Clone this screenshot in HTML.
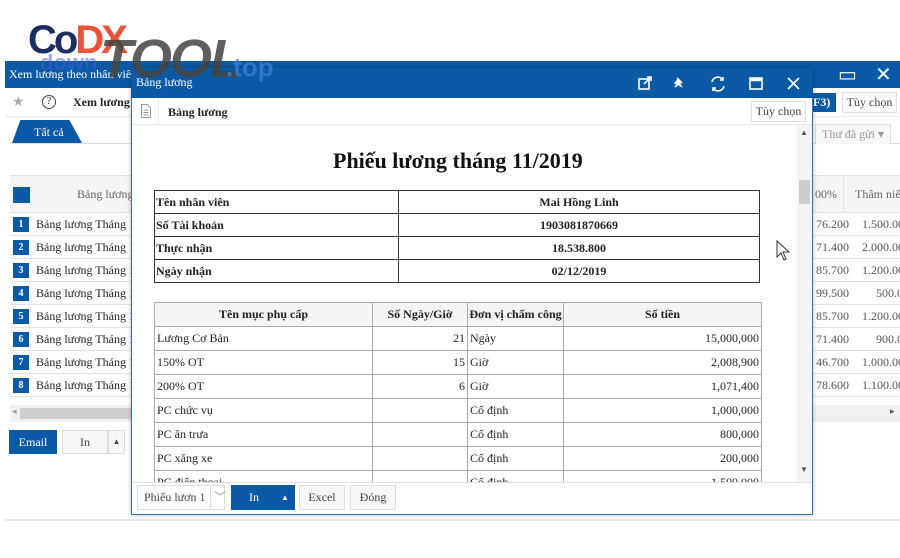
<!DOCTYPE html>
<html><head><meta charset="utf-8"><style>
*{margin:0;padding:0;box-sizing:border-box}
body{width:900px;height:558px;position:relative;overflow:hidden;background:#fff;font-family:"Liberation Serif",serif;font-size:12px;color:#222}
.a{position:absolute}
.blue{background:#0b5aa5}
.t{white-space:nowrap}
.btn{position:absolute;border:1px solid #ddd;background:#f7f7f7;color:#444;text-align:center;font-size:12px}
.row{position:absolute;left:10px;width:890px;height:23px;border-bottom:1px solid #e2e2e2}
.num{position:absolute;left:3px;top:4px;width:16px;height:15px;background:#0b5aa5;color:#fff;font-size:10px;text-align:center;line-height:15px;font-weight:bold}
table{border-collapse:collapse;position:absolute}
</style></head><body>
<!-- main window -->
<div class="a blue" style="left:5px;top:61px;width:895px;height:27px"></div>
<div class="a t" style="left:9px;top:67px;color:#fff;font-size:12px">Xem lương theo nhân viên</div>
<div class="a t" style="left:838px;top:62px;color:#fff;font-size:20px">▭</div>
<div class="a t" style="left:875px;top:62px;color:#fff;font-size:20px">✕</div>
<div class="a" style="left:5px;top:116px;width:895px;height:1px;background:#e6e6e6"></div>
<div class="a t" style="left:12px;top:94px;color:#aaa;font-size:14px">★</div>
<div class="a" style="left:42px;top:95px;width:14px;height:14px;border:1px solid #444;border-radius:50%;font-size:10px;text-align:center;line-height:12px">?</div>
<div class="a t" style="left:73px;top:95px;font-weight:bold">Xem lương</div>
<div class="a t blue" style="left:813px;top:93px;width:23px;height:19px;color:#fff;font-weight:bold;line-height:19px">F3)</div>
<div class="btn t" style="left:842px;top:92px;width:55px;height:21px;line-height:19px;background:#fff">Tùy chọn</div>
<div class="a" style="left:12px;top:120px;width:70px;height:23px;background:#0b5aa5;clip-path:polygon(12% 0,82% 0,100% 100%,0 100%)"></div>
<div class="a t" style="left:34px;top:125px;color:#fff">Tất cả</div>
<div class="a" style="left:10px;top:143px;width:890px;height:1px;background:#ddd"></div>
<div class="a t" style="left:815px;top:124px;color:#999;border:1px solid #ddd;border-bottom:none;padding:2px 6px;background:#f7f7f7">Thư đã gửi ▾</div>
<!-- grid -->
<div class="a" style="left:10px;top:175px;width:890px;height:38px;background:#f5f5f5;border-top:1px solid #e2e2e2;border-bottom:1px solid #e2e2e2"></div>
<div class="a blue" style="left:13px;top:187px;width:17px;height:16px"></div>
<div class="a t" style="left:77px;top:187px;color:#666">Bảng lương</div>
<div class="a t" style="left:815px;top:187px;color:#666">00%</div>
<div class="a t" style="left:855px;top:187px;color:#666">Thâm niên</div>
<div class="a" style="left:843px;top:175px;width:1px;height:38px;background:#e2e2e2"></div>
<div class="row" style="top:213px"><div class="num">1</div><span class="a t" style="left:26px;top:4px">Bảng lương Tháng 1</span><span class="a t" style="left:806px;top:4px;color:#555">76.200</span><span class="a t" style="left:852px;top:4px;color:#555">1.500.00</span></div>
<div class="row" style="top:236px"><div class="num">2</div><span class="a t" style="left:26px;top:4px">Bảng lương Tháng 1</span><span class="a t" style="left:806px;top:4px;color:#555">71.400</span><span class="a t" style="left:852px;top:4px;color:#555">2.000.00</span></div>
<div class="row" style="top:259px"><div class="num">3</div><span class="a t" style="left:26px;top:4px">Bảng lương Tháng 1</span><span class="a t" style="left:806px;top:4px;color:#555">85.700</span><span class="a t" style="left:852px;top:4px;color:#555">1.200.00</span></div>
<div class="row" style="top:282px"><div class="num">4</div><span class="a t" style="left:26px;top:4px">Bảng lương Tháng 1</span><span class="a t" style="left:806px;top:4px;color:#555">99.500</span><span class="a t" style="left:866px;top:4px;color:#555">500.00</span></div>
<div class="row" style="top:305px"><div class="num">5</div><span class="a t" style="left:26px;top:4px">Bảng lương Tháng 1</span><span class="a t" style="left:806px;top:4px;color:#555">85.700</span><span class="a t" style="left:852px;top:4px;color:#555">1.200.00</span></div>
<div class="row" style="top:328px"><div class="num">6</div><span class="a t" style="left:26px;top:4px">Bảng lương Tháng 1</span><span class="a t" style="left:806px;top:4px;color:#555">71.400</span><span class="a t" style="left:866px;top:4px;color:#555">900.00</span></div>
<div class="row" style="top:351px"><div class="num">7</div><span class="a t" style="left:26px;top:4px">Bảng lương Tháng 1</span><span class="a t" style="left:806px;top:4px;color:#555">46.700</span><span class="a t" style="left:852px;top:4px;color:#555">1.000.00</span></div>
<div class="row" style="top:374px"><div class="num">8</div><span class="a t" style="left:26px;top:4px">Bảng lương Tháng 1</span><span class="a t" style="left:806px;top:4px;color:#555">78.600</span><span class="a t" style="left:852px;top:4px;color:#555">1.100.00</span></div>
<div class="a" style="left:10px;top:405px;width:890px;height:17px;background:#f0f0f0"></div>
<div class="a" style="left:20px;top:408px;width:780px;height:11px;background:#cfcfcf"></div>
<div class="a t" style="left:12px;top:406px;font-size:9px;color:#999">◂</div>
<div class="a t" style="left:890px;top:406px;font-size:9px;color:#555">▸</div>
<div class="a t blue" style="left:9px;top:430px;width:48px;height:24px;color:#fff;text-align:center;line-height:24px">Email</div>
<div class="btn" style="left:62px;top:430px;width:46px;height:24px;line-height:22px">In</div>
<div class="btn" style="left:108px;top:430px;width:17px;height:24px;line-height:22px;font-size:8px">▲</div>
<div class="a" style="left:5px;top:519px;width:895px;height:2px;background:#e8e8e8"></div>
<!-- dialog -->
<div class="a" style="left:131px;top:68px;width:682px;height:447px;background:#fff;border:1px solid #3a72b0;box-shadow:0 0 4px rgba(0,0,0,.3)"></div>
<div class="a blue" style="left:131px;top:68px;width:682px;height:30px"></div>
<div class="a t" style="left:136px;top:75px;color:#fff">Bảng lương</div>
<svg class="a" style="left:630px;top:72px" width="180" height="24" fill="none" stroke="#fff" stroke-width="1.6">
<rect x="9" y="7" width="10" height="10"/><path d="M14 12l7-7M17 5h4v4"/>
<path d="M47 6l5 5M45 15l4-4M48 8l3 6-6-3z" fill="#fff"/>
<path d="M82 10a6 6 0 0 1 11-2M94 14a6 6 0 0 1-11 2M93 5v3h-3M83 19v-3h3"/>
<rect x="120" y="6" width="12" height="11"/><path d="M120 8h12" stroke-width="2.5"/>
<path d="M158 6l11 11M169 6l-11 11"/>
</svg>
<div class="a" style="left:132px;top:124px;width:680px;height:1px;background:#e6e6e6"></div>
<div class="a" style="left:158px;top:98px;width:1px;height:26px;background:#e6e6e6"></div>
<svg class="a" style="left:140px;top:104px" width="12" height="14" fill="none" stroke="#999"><path d="M1.5 .5h6l3 3v10h-9z M3.5 6h5M3.5 8.5h5M3.5 11h5"/></svg>
<div class="a t" style="left:168px;top:105px;font-weight:bold">Bảng lương</div>
<div class="btn t" style="left:751px;top:101px;width:55px;height:21px;line-height:19px;background:#fff">Tùy chọn</div>
<div class="a" style="left:797px;top:125px;width:15px;height:357px;background:#f4f4f4"></div>
<div class="a" style="left:799px;top:180px;width:11px;height:24px;background:#ccc"></div>
<div class="a t" style="left:800px;top:128px;font-size:8px;color:#555">▲</div>
<div class="a t" style="left:800px;top:465px;font-size:8px;color:#555">▼</div>
<div class="a t" style="left:333px;top:148px;font-size:22px;font-weight:bold;color:#111">Phiếu lương tháng 11/2019</div>
<table style="left:154px;top:190px;width:606px;font-weight:bold;font-size:12px">
<tr style="height:23px"><td style="border:1px solid #333;width:244px;padding-left:1px">Tên nhân viên</td><td style="border:1px solid #333;text-align:center">Mai Hồng Linh</td></tr>
<tr style="height:23px"><td style="border:1px solid #333;padding-left:1px">Số Tài khoản</td><td style="border:1px solid #333;text-align:center">1903081870669</td></tr>
<tr style="height:23px"><td style="border:1px solid #333;padding-left:1px">Thực nhận</td><td style="border:1px solid #333;text-align:center">18.538.800</td></tr>
<tr style="height:23px"><td style="border:1px solid #333;padding-left:1px">Ngày nhận</td><td style="border:1px solid #333;text-align:center">02/12/2019</td></tr>
</table>
<div class="a" style="left:154px;top:302px;width:608px;height:180px;overflow:hidden">
<table style="left:0;top:0;width:608px;font-size:12px">
<tr style="height:24px;background:#f5f5f5;font-weight:bold;text-align:center"><td style="border:1px solid #aaa;width:218px">Tên mục phụ cấp</td><td style="border:1px solid #aaa;width:95px">Số Ngày/Giờ</td><td style="border:1px solid #aaa;width:96px">Đơn vị chấm công</td><td style="border:1px solid #aaa">Số tiền</td></tr>
<tr style="height:24px"><td style="border:1px solid #aaa;padding-left:2px">Lương Cơ Bản</td><td style="border:1px solid #aaa;text-align:right;padding-right:2px">21</td><td style="border:1px solid #aaa;padding-left:2px">Ngày</td><td style="border:1px solid #aaa;text-align:right;padding-right:2px">15,000,000</td></tr>
<tr style="height:24px"><td style="border:1px solid #aaa;padding-left:2px">150% OT</td><td style="border:1px solid #aaa;text-align:right;padding-right:2px">15</td><td style="border:1px solid #aaa;padding-left:2px">Giờ</td><td style="border:1px solid #aaa;text-align:right;padding-right:2px">2,008,900</td></tr>
<tr style="height:24px"><td style="border:1px solid #aaa;padding-left:2px">200% OT</td><td style="border:1px solid #aaa;text-align:right;padding-right:2px">6</td><td style="border:1px solid #aaa;padding-left:2px">Giờ</td><td style="border:1px solid #aaa;text-align:right;padding-right:2px">1,071,400</td></tr>
<tr style="height:24px"><td style="border:1px solid #aaa;padding-left:2px">PC chức vụ</td><td style="border:1px solid #aaa"></td><td style="border:1px solid #aaa;padding-left:2px">Cố định</td><td style="border:1px solid #aaa;text-align:right;padding-right:2px">1,000,000</td></tr>
<tr style="height:24px"><td style="border:1px solid #aaa;padding-left:2px">PC ăn trưa</td><td style="border:1px solid #aaa"></td><td style="border:1px solid #aaa;padding-left:2px">Cố định</td><td style="border:1px solid #aaa;text-align:right;padding-right:2px">800,000</td></tr>
<tr style="height:24px"><td style="border:1px solid #aaa;padding-left:2px">PC xăng xe</td><td style="border:1px solid #aaa"></td><td style="border:1px solid #aaa;padding-left:2px">Cố định</td><td style="border:1px solid #aaa;text-align:right;padding-right:2px">200,000</td></tr>
<tr style="height:24px"><td style="border:1px solid #aaa;padding-left:2px">PC điện thoại</td><td style="border:1px solid #aaa"></td><td style="border:1px solid #aaa;padding-left:2px">Cố định</td><td style="border:1px solid #aaa;text-align:right;padding-right:2px">1,500,000</td></tr>
</table></div>
<div class="a" style="left:132px;top:482px;width:680px;height:1px;background:#e0e0e0"></div>
<div class="btn t" style="left:137px;top:485px;width:88px;height:25px;line-height:23px;background:#fff;text-align:left;padding-left:6px">Phiếu lươn 1 <span style="position:absolute;left:72px;top:0;border-left:1px solid #ddd;padding-left:3px;color:#999">﹀</span></div>
<div class="a blue t" style="left:231px;top:485px;width:64px;height:25px;color:#fff;line-height:25px;padding-left:18px">In<span style="position:absolute;left:50px;font-size:8px">▲</span></div>
<div class="btn" style="left:299px;top:485px;width:46px;height:25px;line-height:23px">Excel</div>
<div class="btn" style="left:350px;top:485px;width:46px;height:25px;line-height:23px">Đóng</div>
<!-- logo (on top) -->
<div class="a t" style="left:28px;top:18px;font:bold 40px 'Liberation Sans',sans-serif;color:#1c2d5e;letter-spacing:-3px">Co<span style="color:#e8533a">DX</span></div>
<div class="a t" style="left:40px;top:50px;font:bold 22px 'Liberation Sans',sans-serif;color:#3b5ed6;opacity:.5">down</div>
<div class="a t" style="left:100px;top:28px;font:italic bold 54px 'Liberation Sans',sans-serif;color:#444;opacity:.85;letter-spacing:-2px">TOOL</div>
<div class="a t" style="left:226px;top:52px;font:bold 26px 'Liberation Sans',sans-serif;color:#3b7ed6;opacity:.8">.top</div>
<!-- cursor -->
<svg class="a" style="left:776px;top:240px" width="14" height="22"><path d="M1 1v16l4-4 3 7 2-1-3-7h6z" fill="#fff" stroke="#333"/></svg>
</body></html>
